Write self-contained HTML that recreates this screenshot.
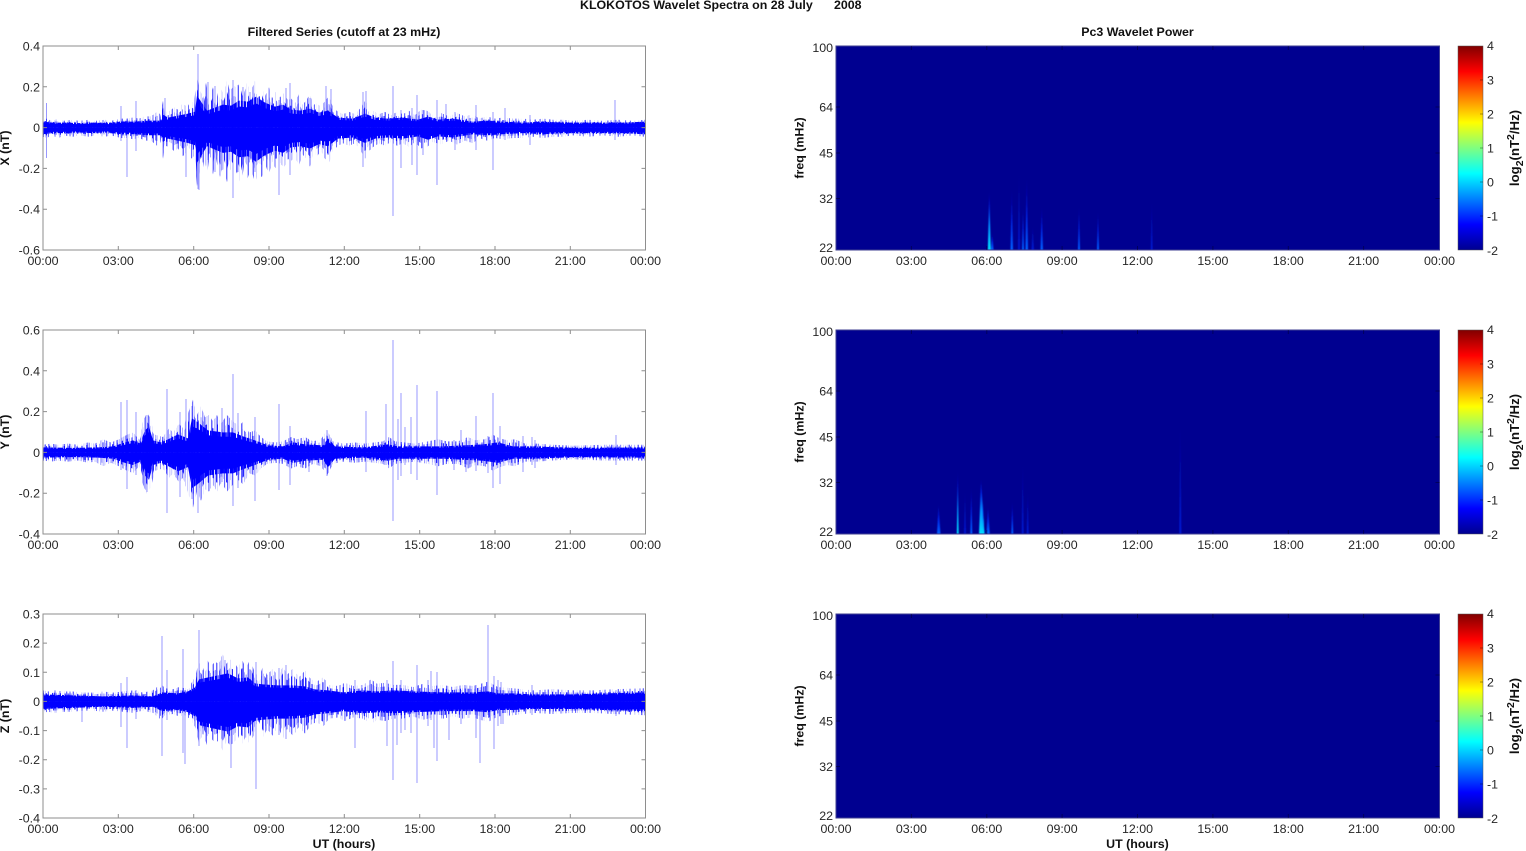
<!DOCTYPE html>
<html>
<head>
<meta charset="utf-8">
<style>
html,body{margin:0;padding:0;background:#fff;width:1526px;height:851px;overflow:hidden}
svg{display:block;filter:blur(.35px)}
text{font-family:"Liberation Sans",Arial,sans-serif;font-size:12.4px;fill:#262626}
.b{font-weight:bold;fill:#111}
.m{text-anchor:middle}
.e{text-anchor:end}
.ax{fill:none;stroke:#8e8e8e;stroke-width:1}
.sp{fill:none;stroke:#0000ff;stroke-width:.85;stroke-opacity:.48}
.co{fill:#0000ff}
.tk{fill:none;stroke:#000;stroke-opacity:.35;stroke-width:1}
.lg{font-size:13.2px}
</style>
</head>
<body>
<svg width="1526" height="851" viewBox="0 0 1526 851" xmlns="http://www.w3.org/2000/svg">
<defs>
<linearGradient id="jet" x1="0" y1="1" x2="0" y2="0">
<stop offset="0" stop-color="#00008f"/><stop offset=".125" stop-color="#0000ff"/><stop offset=".375" stop-color="#00ffff"/><stop offset=".625" stop-color="#ffff00"/><stop offset=".875" stop-color="#ff0000"/><stop offset="1" stop-color="#800000"/>
</linearGradient>
<linearGradient id="s1" x1="0" y1="1" x2="0" y2="0"><stop offset="0" stop-color="#00e0ff"/><stop offset=".4" stop-color="#0090ff"/><stop offset=".75" stop-color="#0020e0"/><stop offset="1" stop-color="#000090"/></linearGradient>
<linearGradient id="s2" x1="0" y1="1" x2="0" y2="0"><stop offset="0" stop-color="#0060ff"/><stop offset=".5" stop-color="#0020e0"/><stop offset="1" stop-color="#000090"/></linearGradient>
<linearGradient id="s3" x1="0" y1="1" x2="0" y2="0"><stop offset="0" stop-color="#0018d0"/><stop offset=".6" stop-color="#0010b0"/><stop offset="1" stop-color="#000090"/></linearGradient>
<filter id="bl" x="-50%" y="-5%" width="200%" height="110%"><feGaussianBlur stdDeviation=".6 .5"/></filter>
<clipPath id="c1"><rect x="836" y="46" width="603.5" height="204"/></clipPath>
<clipPath id="c2"><rect x="836" y="330" width="603.5" height="204"/></clipPath>

<filter id="a1" x="-1%" y="-10%" width="102%" height="120%" color-interpolation-filters="sRGB"><feTurbulence type="fractalNoise" baseFrequency="0.62 0" numOctaves="1" seed="3"/><feColorMatrix type="matrix" values="0 0 0 0 0  0 0 0 0 0  0 0 0 0 1  0 0 0 14 -7.3" result="s"/><feComposite in="s" in2="SourceAlpha" operator="in"/></filter>
<filter id="a2" x="-1%" y="-10%" width="102%" height="120%" color-interpolation-filters="sRGB"><feTurbulence type="fractalNoise" baseFrequency="0.57 0" numOctaves="1" seed="11"/><feColorMatrix type="matrix" values="0 0 0 0 0  0 0 0 0 0  0 0 0 0 1  0 0 0 14 -7" result="s"/><feComposite in="s" in2="SourceAlpha" operator="in"/></filter>
<filter id="a3" x="-1%" y="-10%" width="102%" height="120%" color-interpolation-filters="sRGB"><feTurbulence type="fractalNoise" baseFrequency="0.66 0" numOctaves="1" seed="21"/><feColorMatrix type="matrix" values="0 0 0 0 0  0 0 0 0 0  0 0 0 0 1  0 0 0 14 -5.6" result="s"/><feComposite in="s" in2="SourceAlpha" operator="in"/></filter>
<filter id="b1" x="-1%" y="-10%" width="102%" height="120%" color-interpolation-filters="sRGB"><feTurbulence type="fractalNoise" baseFrequency="0.6 0" numOctaves="1" seed="33"/><feColorMatrix type="matrix" values="0 0 0 0 0  0 0 0 0 0  0 0 0 0 1  0 0 0 14 -7.3" result="s"/><feComposite in="s" in2="SourceAlpha" operator="in"/></filter>
<filter id="b2" x="-1%" y="-10%" width="102%" height="120%" color-interpolation-filters="sRGB"><feTurbulence type="fractalNoise" baseFrequency="0.64 0" numOctaves="1" seed="47"/><feColorMatrix type="matrix" values="0 0 0 0 0  0 0 0 0 0  0 0 0 0 1  0 0 0 14 -7" result="s"/><feComposite in="s" in2="SourceAlpha" operator="in"/></filter>
<filter id="b3" x="-1%" y="-10%" width="102%" height="120%" color-interpolation-filters="sRGB"><feTurbulence type="fractalNoise" baseFrequency="0.59 0" numOctaves="1" seed="58"/><feColorMatrix type="matrix" values="0 0 0 0 0  0 0 0 0 0  0 0 0 0 1  0 0 0 14 -5.6" result="s"/><feComposite in="s" in2="SourceAlpha" operator="in"/></filter>

<path id="xf" d="M0,0L0,-7 4,-8 8,-6 16,-8 20,-6 30,-7 36,-6 46,-7 52,-6 62,-7 68,-6 78,-8 84,-8 90,-9 96,-8 102,-10 108,-10 114,-14 117,-12 120,-24 122,-14 127,-15 131,-18 135,-16 140,-22 144,-18 148,-24 151,-22 154,-45 157,-34 160,-26 163,-40 166,-26 170,-36 173,-24 177,-38 180,-30 184,-42 187,-32 191,-38 194,-34 198,-44 201,-30 204,-40 208,-32 212,-42 215,-36 219,-38 222,-28 226,-36 229,-26 233,-32 237,-27 241,-31 245,-24 248,-26 252,-22 256,-30 259,-20 263,-24 267,-30 270,-20 274,-22 278,-18 282,-24 286,-28 290,-18 295,-14 300,-12 306,-14 312,-12 318,-18 322,-24 326,-18 330,-15 336,-12 342,-14 348,-11 354,-14 360,-12 366,-15 372,-11 378,-16 384,-15 390,-11 398,-13 406,-10 414,-13 422,-10 430,-12 436,-8 444,-10 452,-8 460,-9 470,-8 480,-8 490,-7 500,-8 510,-7 520,-7 530,-6 545,-7 560,-6 575,-7 590,-6 602,-7L602,0Z"/>
<path id="xc" d="M0,0L0,-6 10,-5 22,-5 35,-4.5 50,-5 65,-4.5 78,-6 92,-6 105,-7 117,-7 120,-13 125,-10 135,-12 145,-14 152,-16 154,-32 158,-26 164,-17 172,-20 180,-23 188,-22 196,-27 205,-26 213,-31 222,-25 232,-21 240,-23 248,-18 258,-17 267,-19 276,-15 285,-17 295,-10 310,-9 322,-14 332,-10 345,-9 360,-10 375,-8 385,-11 395,-8 410,-9 430,-6 445,-7 460,-6 480,-5 500,-6 520,-5 540,-5 560,-5 580,-5 602,-6L602,0Z"/>
<path id="yf" d="M0,0L0,-7 8,-8 15,-7 25,-8 35,-7 45,-9 52,-8 60,-12 68,-9 76,-12 84,-16 90,-18 96,-12 100,-28 104,-36 108,-30 112,-16 120,-14 126,-22 130,-18 136,-26 140,-22 146,-38 150,-48 154,-34 158,-42 162,-32 166,-34 170,-28 174,-34 178,-26 184,-34 190,-28 196,-24 200,-28 206,-18 212,-20 218,-14 224,-10 232,-9 240,-10 248,-14 254,-12 262,-14 270,-10 278,-12 284,-20 290,-10 300,-8 312,-9 322,-8 340,-10 346,-14 352,-10 362,-9 372,-8 385,-10 395,-12 404,-10 415,-10 425,-14 432,-11 442,-12 450,-16 456,-13 464,-11 472,-12 482,-8 494,-8 510,-7 530,-6 560,-7 602,-7L602,0Z"/>
<path id="yc" d="M0,0L0,-5 30,-4.5 55,-5 70,-6 82,-10 90,-12 97,-9 102,-22 106,-26 110,-12 118,-10 125,-13 135,-18 145,-14 149,-34 155,-30 165,-22 180,-20 190,-20 200,-16 212,-12 225,-7 240,-6 250,-10 262,-8 280,-7 285,-14 292,-6 320,-5 345,-8 355,-6 400,-6 440,-8 455,-10 470,-6 490,-6 530,-4.5 602,-5L602,0Z"/>
<path id="zf" d="M0,0L0,-10 5,-9 12,-10 20,-9 30,-9 40,-8 50,-8 60,-9 70,-8 80,-9 90,-10 100,-8 110,-10 118,-16 122,-12 130,-11 136,-13 142,-12 148,-16 152,-22 156,-36 160,-28 164,-38 168,-32 172,-36 176,-34 180,-44 183,-34 187,-38 191,-36 195,-30 199,-38 203,-30 207,-38 212,-26 216,-22 220,-32 224,-24 230,-30 235,-22 240,-32 244,-24 250,-30 256,-22 262,-28 268,-20 274,-18 280,-22 286,-15 295,-14 302,-17 310,-14 320,-15 328,-20 334,-16 342,-17 350,-15 360,-15 370,-13 380,-16 390,-14 400,-15 410,-13 420,-15 430,-14 445,-18 455,-13 470,-12 490,-10 510,-11 530,-10 550,-10 570,-11 602,-12L602,0Z"/>
<path id="zc" d="M0,0L0,-7 30,-6 60,-5 90,-6 110,-5 119,-9 135,-8 145,-10 152,-14 156,-22 170,-25 185,-28 195,-23 205,-24 212,-18 220,-17 235,-16 250,-16 262,-15 272,-12 285,-11 300,-9 320,-11 335,-10 350,-11 370,-10 400,-9 430,-9 445,-10 455,-8 470,-8 490,-7 530,-7 560,-8 602,-9L602,0Z"/>
</defs>

<text class="b" x="580" y="9">KLOKOTOS Wavelet Spectra on 28 July</text>
<text class="b" x="834" y="9">2008</text>
<text class="b m" x="344" y="36">Filtered Series (cutoff at 23 mHz)</text>
<text class="b m" x="1137.5" y="36">Pc3 Wavelet Power</text>

<!-- ============ X series ============ -->
<g transform="translate(43,127.6)">
<g filter="url(#a1)" opacity=".6"><use href="#xf" transform="scale(1,1.12)"/></g>
<g filter="url(#b1)" opacity=".6"><use href="#xf" transform="scale(1,-1.3)"/></g>
<g filter="url(#a2)" opacity=".85"><use href="#xf" transform="scale(1,.85)"/></g>
<g filter="url(#b2)" opacity=".85"><use href="#xf" transform="scale(1,-.98)"/></g>
<g filter="url(#a3)"><use href="#xc"/></g>
<g filter="url(#b3)"><use href="#xc" transform="scale(1,-1.1)"/></g>
<use class="co" href="#xc" transform="scale(1,.78)"/>
<use class="co" href="#xc" transform="scale(1,-.85)"/>
</g>
<path class="sp" d="M46.5 103V158M121 106V141M127 127V177M136 101V151M165 98V128M186 127V177M198 54V189M199 127V190M208 82V160M215 86V172M222 110V170M233 80V198M238 85V172M243 87V150M250 92V150M255 100V172M279 100V195M286 88V150M290 83V175M310 98V158M326 86V140M328 110V155M331 89V140M363 92V167M366 91V140M393 86V216M401 110V168M412 108V165M417 95V175M437 100V185M446 104V140M476 105V150M493 112V170M505 108V140M615 100V140M423 110V155M455 112V150M530 115V145"/>
<rect class="ax" x="43" y="46" width="602.5" height="204"/>
<path class="ax" d="M118.3 46v4M193.7 46v4M269 46v4M344.3 46v4M419.7 46v4M495 46v4M570.3 46v4M118.3 250v-4M193.7 250v-4M269 250v-4M344.3 250v-4M419.7 250v-4M495 250v-4M570.3 250v-4M43 86.8h4M43 127.6h4M43 168.4h4M43 209.2h4M645.5 86.8h-4M645.5 127.6h-4M645.5 168.4h-4M645.5 209.2h-4"/>
<text class="e" x="40" y="50.5">0.4</text><text class="e" x="40" y="91.3">0.2</text><text class="e" x="40" y="132">0</text><text class="e" x="40" y="172.9">-0.2</text><text class="e" x="40" y="213.7">-0.4</text><text class="e" x="40" y="254.5">-0.6</text>
<text class="m" x="43" y="265">00:00</text><text class="m" x="118.3" y="265">03:00</text><text class="m" x="193.7" y="265">06:00</text><text class="m" x="269" y="265">09:00</text><text class="m" x="344.3" y="265">12:00</text><text class="m" x="419.7" y="265">15:00</text><text class="m" x="495" y="265">18:00</text><text class="m" x="570.3" y="265">21:00</text><text class="m" x="645.5" y="265">00:00</text>
<text class="b m" transform="translate(9,148) rotate(-90)">X (nT)</text>

<!-- ============ Y series ============ -->
<g transform="translate(43,452.4)">
<g filter="url(#a2)" opacity=".6"><use href="#yf" transform="scale(1,1.1)"/></g>
<g filter="url(#b2)" opacity=".6"><use href="#yf" transform="scale(1,-1.15)"/></g>
<g filter="url(#a1)" opacity=".85"><use href="#yf" transform="scale(1,.85)"/></g>
<g filter="url(#b1)" opacity=".85"><use href="#yf" transform="scale(1,-.9)"/></g>
<g filter="url(#b3)"><use href="#yc"/></g>
<g filter="url(#a3)"><use href="#yc" transform="scale(1,-1.05)"/></g>
<use class="co" href="#yc" transform="scale(1,.78)"/>
<use class="co" href="#yc" transform="scale(1,-.82)"/>
</g>
<path class="sp" d="M121 402V470M127 400V489M136 412V475M147 415V492M167 389V513M180 412V497M186 399V470M192 406V499M198 420V513M222 408V482M233 374V506M238 413V488M255 417V501M279 404V490M290 426V485M309 440V472M327 430V476M366 411V472M386 404V465M393 340V521M398 419V480M401 393V476M405 427V465M411 417V474M417 385V480M437 391V495M454 440V470M461 430V465M466 440V472M476 416V471M488 436V473M493 393V488M500 426V484M523 436V472M532 437V465M535 440V468M616 435V465"/>
<rect class="ax" x="43" y="330" width="602.5" height="204"/>
<path class="ax" d="M118.3 330v4M193.7 330v4M269 330v4M344.3 330v4M419.7 330v4M495 330v4M570.3 330v4M118.3 534v-4M193.7 534v-4M269 534v-4M344.3 534v-4M419.7 534v-4M495 534v-4M570.3 534v-4M43 370.8h4M43 411.6h4M43 452.4h4M43 493.2h4M645.5 370.8h-4M645.5 411.6h-4M645.5 452.4h-4M645.5 493.2h-4"/>
<text class="e" x="40" y="334.5">0.6</text><text class="e" x="40" y="375.3">0.4</text><text class="e" x="40" y="416.1">0.2</text><text class="e" x="40" y="456.9">0</text><text class="e" x="40" y="497.7">-0.2</text><text class="e" x="40" y="538.5">-0.4</text>
<text class="m" x="43" y="549">00:00</text><text class="m" x="118.3" y="549">03:00</text><text class="m" x="193.7" y="549">06:00</text><text class="m" x="269" y="549">09:00</text><text class="m" x="344.3" y="549">12:00</text><text class="m" x="419.7" y="549">15:00</text><text class="m" x="495" y="549">18:00</text><text class="m" x="570.3" y="549">21:00</text><text class="m" x="645.5" y="549">00:00</text>
<text class="b m" transform="translate(9,432) rotate(-90)">Y (nT)</text>

<!-- ============ Z series ============ -->
<g transform="translate(43,701.4)">
<g filter="url(#b1)" opacity=".6"><use href="#zf" transform="scale(1,1.1)"/></g>
<g filter="url(#a1)" opacity=".6"><use href="#zf" transform="scale(1,-1.15)"/></g>
<g filter="url(#b2)" opacity=".85"><use href="#zf" transform="scale(1,.88)"/></g>
<g filter="url(#a2)" opacity=".85"><use href="#zf" transform="scale(1,-.92)"/></g>
<g filter="url(#a3)"><use href="#zc"/></g>
<g filter="url(#b3)"><use href="#zc" transform="scale(1,-1.08)"/></g>
<use class="co" href="#zc" transform="scale(1,.85)"/>
<use class="co" href="#zc" transform="scale(1,-.92)"/>
</g>
<path class="sp" d="M82 700V722M121 683V727M127 677V748M136 690V719M162 636V756M167 670V720M183 649V753M185 690V764M199 630V746M225 660V730M231 690V768M256 662V789M279 668V735M286 665V739M355 680V748M387 680V746M393 661V780M397 690V745M401 680V733M405 690V730M411 690V733M417 665V783M428 680V726M431 671V720M434 690V748M437 672V761M449 690V740M461 690V724M476 685V738M480 690V763M488 625V715M494 676V749M498 680V726M501 682V724M503 690V724M532 685V715M616 690V716"/>
<rect class="ax" x="43" y="614" width="602.5" height="204"/>
<path class="ax" d="M118.3 614v4M193.7 614v4M269 614v4M344.3 614v4M419.7 614v4M495 614v4M570.3 614v4M118.3 818v-4M193.7 818v-4M269 818v-4M344.3 818v-4M419.7 818v-4M495 818v-4M570.3 818v-4M43 643.1h4M43 672.3h4M43 701.4h4M43 730.6h4M43 759.7h4M43 788.9h4M645.5 643.1h-4M645.5 672.3h-4M645.5 701.4h-4M645.5 730.6h-4M645.5 759.7h-4M645.5 788.9h-4"/>
<text class="e" x="40" y="618.5">0.3</text><text class="e" x="40" y="647.6">0.2</text><text class="e" x="40" y="676.8">0.1</text><text class="e" x="40" y="705.9">0</text><text class="e" x="40" y="735.1">-0.1</text><text class="e" x="40" y="764.2">-0.2</text><text class="e" x="40" y="793.4">-0.3</text><text class="e" x="40" y="822.5">-0.4</text>
<text class="m" x="43" y="833">00:00</text><text class="m" x="118.3" y="833">03:00</text><text class="m" x="193.7" y="833">06:00</text><text class="m" x="269" y="833">09:00</text><text class="m" x="344.3" y="833">12:00</text><text class="m" x="419.7" y="833">15:00</text><text class="m" x="495" y="833">18:00</text><text class="m" x="570.3" y="833">21:00</text><text class="m" x="645.5" y="833">00:00</text>
<text class="b m" transform="translate(9,716) rotate(-90)">Z (nT)</text>
<text class="b m" x="344" y="848">UT (hours)</text>

<!-- ============ Spectrum 1 ============ -->
<rect x="836" y="46" width="603.5" height="204" fill="#000090"/>
<g clip-path="url(#c1)"><g filter="url(#bl)">
<path fill="url(#s1)" d="M987.8 250L989.3 190L990.8 250Z"/>
<path fill="url(#s2)" d="M991 250L992.3 232L993.6 250Z"/>
<path fill="url(#s2)" d="M1010.5 250L1011.7 188L1013 250Z"/>
<path fill="url(#s3)" d="M1018 250L1019 170L1020 250Z"/>
<path fill="url(#s2)" d="M1022 250L1023 205L1024 250Z"/>
<path fill="url(#s2)" d="M1025.5 250L1026.7 175L1028 250Z"/>
<path fill="url(#s3)" d="M1031.5 250L1032.7 225L1034 250Z"/>
<path fill="url(#s2)" d="M1040.5 250L1041.7 205L1043 250Z"/>
<path fill="url(#s2)" d="M1078 250L1079 205L1080 250Z"/>
<path fill="url(#s2)" d="M1097 250L1098 210L1099 250Z"/>
<path fill="url(#s3)" d="M1150.7 250L1151.7 200L1152.7 250Z"/>
</g></g>
<rect x="836" y="46" width="603.5" height="204" fill="none" stroke="#3f3f92" stroke-width="1"/>
<path class="tk" d="M911.4 250v-4M986.8 250v-4M1062.1 250v-4M1137.5 250v-4M1212.9 250v-4M1288.3 250v-4M1363.6 250v-4M911.4 46v4M986.8 46v4M1062.1 46v4M1137.5 46v4M1212.9 46v4M1288.3 46v4M1363.6 46v4M836 107h4M836 153h4M836 198.5h4M1439.5 107h-4M1439.5 153h-4M1439.5 198.5h-4"/>
<text class="e" x="833" y="52">100</text><text class="e" x="833" y="111.5">64</text><text class="e" x="833" y="157.5">45</text><text class="e" x="833" y="203">32</text><text class="e" x="833" y="252">22</text>
<text class="m" x="836" y="265">00:00</text><text class="m" x="911.4" y="265">03:00</text><text class="m" x="986.8" y="265">06:00</text><text class="m" x="1062.1" y="265">09:00</text><text class="m" x="1137.5" y="265">12:00</text><text class="m" x="1212.9" y="265">15:00</text><text class="m" x="1288.3" y="265">18:00</text><text class="m" x="1363.6" y="265">21:00</text><text class="m" x="1439.5" y="265">00:00</text>
<text class="b m" transform="translate(803.5,148) rotate(-90)">freq (mHz)</text>
<rect x="1458" y="46" width="25" height="204" fill="url(#jet)" stroke="#555" stroke-width=".5"/>
<path class="tk" d="M1483 80h-3M1483 114h-3M1483 148h-3M1483 182h-3M1483 216h-3"/>
<text x="1487" y="50">4</text><text x="1487" y="84.5">3</text><text x="1487" y="118.5">2</text><text x="1487" y="152.5">1</text><text x="1487" y="186.5">0</text><text x="1487" y="220.5">-1</text><text x="1487" y="255">-2</text>
<text class="b m lg" transform="translate(1519,148) rotate(-90)">log<tspan dy="4" font-size="10.5">2</tspan><tspan dy="-4">(nT</tspan><tspan dy="-5" font-size="10.5">2</tspan><tspan dy="5">/Hz)</tspan></text>

<!-- ============ Spectrum 2 ============ -->
<rect x="836" y="330" width="603.5" height="204" fill="#000090"/>
<g clip-path="url(#c2)"><g filter="url(#bl)">
<path fill="url(#s2)" d="M937 534L938.5 503L940.5 534Z"/>
<path fill="url(#s1)" d="M956.8 534L957.7 470L958.7 534Z"/>
<path fill="url(#s3)" d="M964 534L965 490L966 534Z"/>
<path fill="url(#s2)" d="M970.3 534L971.3 485L972.3 534Z"/>
<path fill="url(#s1)" d="M979 534L981 478L984.5 534Z"/>
<path fill="url(#s1)" d="M981.8 534L983 500L984.2 534Z"/>
<path fill="url(#s2)" d="M986.5 534L988 505L989.8 534Z"/>
<path fill="url(#s2)" d="M1011.3 534L1012.3 500L1013.3 534Z"/>
<path fill="url(#s3)" d="M1021.7 534L1022.7 460L1023.7 534Z"/>
<path fill="url(#s3)" d="M1026.7 534L1027.7 490L1028.7 534Z"/>
<path fill="url(#s3)" d="M1179.2 534L1180.3 420L1181.4 534Z"/>
</g></g>
<rect x="836" y="330" width="603.5" height="204" fill="none" stroke="#3f3f92" stroke-width="1"/>
<path class="tk" d="M911.4 534v-4M986.8 534v-4M1062.1 534v-4M1137.5 534v-4M1212.9 534v-4M1288.3 534v-4M1363.6 534v-4M911.4 330v4M986.8 330v4M1062.1 330v4M1137.5 330v4M1212.9 330v4M1288.3 330v4M1363.6 330v4M836 391h4M836 437h4M836 482.5h4M1439.5 391h-4M1439.5 437h-4M1439.5 482.5h-4"/>
<text class="e" x="833" y="336">100</text><text class="e" x="833" y="395.5">64</text><text class="e" x="833" y="441.5">45</text><text class="e" x="833" y="487">32</text><text class="e" x="833" y="536">22</text>
<text class="m" x="836" y="549">00:00</text><text class="m" x="911.4" y="549">03:00</text><text class="m" x="986.8" y="549">06:00</text><text class="m" x="1062.1" y="549">09:00</text><text class="m" x="1137.5" y="549">12:00</text><text class="m" x="1212.9" y="549">15:00</text><text class="m" x="1288.3" y="549">18:00</text><text class="m" x="1363.6" y="549">21:00</text><text class="m" x="1439.5" y="549">00:00</text>
<text class="b m" transform="translate(803.5,432) rotate(-90)">freq (mHz)</text>
<rect x="1458" y="330" width="25" height="204" fill="url(#jet)" stroke="#555" stroke-width=".5"/>
<path class="tk" d="M1483 364h-3M1483 398h-3M1483 432h-3M1483 466h-3M1483 500h-3"/>
<text x="1487" y="334">4</text><text x="1487" y="368.5">3</text><text x="1487" y="402.5">2</text><text x="1487" y="436.5">1</text><text x="1487" y="470.5">0</text><text x="1487" y="504.5">-1</text><text x="1487" y="539">-2</text>
<text class="b m lg" transform="translate(1519,432) rotate(-90)">log<tspan dy="4" font-size="10.5">2</tspan><tspan dy="-4">(nT</tspan><tspan dy="-5" font-size="10.5">2</tspan><tspan dy="5">/Hz)</tspan></text>

<!-- ============ Spectrum 3 ============ -->
<rect x="836" y="614" width="603.5" height="204" fill="#000090"/>
<rect x="836" y="614" width="603.5" height="204" fill="none" stroke="#3f3f92" stroke-width="1"/>
<path class="tk" d="M911.4 818v-4M986.8 818v-4M1062.1 818v-4M1137.5 818v-4M1212.9 818v-4M1288.3 818v-4M1363.6 818v-4M911.4 614v4M986.8 614v4M1062.1 614v4M1137.5 614v4M1212.9 614v4M1288.3 614v4M1363.6 614v4M836 675h4M836 721h4M836 766.5h4M1439.5 675h-4M1439.5 721h-4M1439.5 766.5h-4"/>
<text class="e" x="833" y="620">100</text><text class="e" x="833" y="679.5">64</text><text class="e" x="833" y="725.5">45</text><text class="e" x="833" y="771">32</text><text class="e" x="833" y="820">22</text>
<text class="m" x="836" y="833">00:00</text><text class="m" x="911.4" y="833">03:00</text><text class="m" x="986.8" y="833">06:00</text><text class="m" x="1062.1" y="833">09:00</text><text class="m" x="1137.5" y="833">12:00</text><text class="m" x="1212.9" y="833">15:00</text><text class="m" x="1288.3" y="833">18:00</text><text class="m" x="1363.6" y="833">21:00</text><text class="m" x="1439.5" y="833">00:00</text>
<text class="b m" transform="translate(803.5,716) rotate(-90)">freq (mHz)</text>
<text class="b m" x="1137.5" y="848">UT (hours)</text>
<rect x="1458" y="614" width="25" height="204" fill="url(#jet)" stroke="#555" stroke-width=".5"/>
<path class="tk" d="M1483 648h-3M1483 682h-3M1483 716h-3M1483 750h-3M1483 784h-3"/>
<text x="1487" y="618">4</text><text x="1487" y="652.5">3</text><text x="1487" y="686.5">2</text><text x="1487" y="720.5">1</text><text x="1487" y="754.5">0</text><text x="1487" y="788.5">-1</text><text x="1487" y="823">-2</text>
<text class="b m lg" transform="translate(1519,716) rotate(-90)">log<tspan dy="4" font-size="10.5">2</tspan><tspan dy="-4">(nT</tspan><tspan dy="-5" font-size="10.5">2</tspan><tspan dy="5">/Hz)</tspan></text>
</svg>
</body>
</html>
